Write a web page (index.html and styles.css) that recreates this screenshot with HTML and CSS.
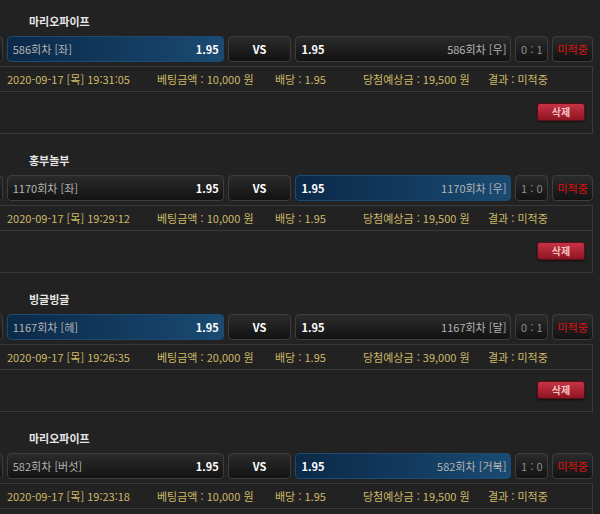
FILE: index.html
```html
<!DOCTYPE html>
<html lang="ko">
<head>
<meta charset="utf-8">
<link rel="stylesheet" href="styles.css">
</head>
<body>
<div class="wrap">

  <div class="block">
    <div class="title">마리오파이프</div>
    <div class="row">
      <div class="btn stub"></div>
      <div class="btn team left sel"><span class="name">586회차 [좌]</span><span class="odd">1.95</span></div>
      <div class="btn vs">VS</div>
      <div class="btn team right"><span class="odd">1.95</span><span class="name">586회차 [우]</span></div>
      <div class="btn score">0 : 1</div>
      <div class="btn status">미적중</div>
    </div>
    <div class="info">
      <div class="info-row">
        <span class="c-date">2020-09-17 [목] 19:31:05</span>
        <span class="c-bet">베팅금액 : 10,000 원</span>
        <span class="c-odd">배당 : 1.95</span>
        <span class="c-exp">당첨예상금 : 19,500 원</span>
        <span class="c-res">결과 : 미적중</span>
      </div>
      <div class="info-foot"><button class="del">삭제</button></div>
    </div>
  </div>

  <div class="block">
    <div class="title">홍부놀부</div>
    <div class="row">
      <div class="btn stub"></div>
      <div class="btn team left"><span class="name">1170회차 [좌]</span><span class="odd">1.95</span></div>
      <div class="btn vs">VS</div>
      <div class="btn team right sel"><span class="odd">1.95</span><span class="name">1170회차 [우]</span></div>
      <div class="btn score">1 : 0</div>
      <div class="btn status">미적중</div>
    </div>
    <div class="info">
      <div class="info-row">
        <span class="c-date">2020-09-17 [목] 19:29:12</span>
        <span class="c-bet">베팅금액 : 10,000 원</span>
        <span class="c-odd">배당 : 1.95</span>
        <span class="c-exp">당첨예상금 : 19,500 원</span>
        <span class="c-res">결과 : 미적중</span>
      </div>
      <div class="info-foot"><button class="del">삭제</button></div>
    </div>
  </div>

  <div class="block">
    <div class="title">빙글빙글</div>
    <div class="row">
      <div class="btn stub"></div>
      <div class="btn team left sel"><span class="name">1167회차 [헤]</span><span class="odd">1.95</span></div>
      <div class="btn vs">VS</div>
      <div class="btn team right"><span class="odd">1.95</span><span class="name">1167회차 [달]</span></div>
      <div class="btn score">0 : 1</div>
      <div class="btn status">미적중</div>
    </div>
    <div class="info">
      <div class="info-row">
        <span class="c-date">2020-09-17 [목] 19:26:35</span>
        <span class="c-bet">베팅금액 : 20,000 원</span>
        <span class="c-odd">배당 : 1.95</span>
        <span class="c-exp">당첨예상금 : 39,000 원</span>
        <span class="c-res">결과 : 미적중</span>
      </div>
      <div class="info-foot"><button class="del">삭제</button></div>
    </div>
  </div>

  <div class="block">
    <div class="title">마리오파이프</div>
    <div class="row">
      <div class="btn stub"></div>
      <div class="btn team left"><span class="name">582회차 [버섯]</span><span class="odd">1.95</span></div>
      <div class="btn vs">VS</div>
      <div class="btn team right sel"><span class="odd">1.95</span><span class="name">582회차 [거북]</span></div>
      <div class="btn score">1 : 0</div>
      <div class="btn status">미적중</div>
    </div>
    <div class="info">
      <div class="info-row">
        <span class="c-date">2020-09-17 [목] 19:23:18</span>
        <span class="c-bet">베팅금액 : 10,000 원</span>
        <span class="c-odd">배당 : 1.95</span>
        <span class="c-exp">당첨예상금 : 19,500 원</span>
        <span class="c-res">결과 : 미적중</span>
      </div>
      <div class="info-foot"><button class="del">삭제</button></div>
    </div>
  </div>

</div>
</body>
</html>
```
FILE: styles.css
```css
html, body {
  margin: 0;
  padding: 0;
  background: #222222;
  overflow: hidden;
}
body {
  font-family: "Noto Sans CJK KR", "Noto Sans", sans-serif;
  font-size: 11px;
  color: #bbbbbb;
}
.wrap {
  margin-left: -50px;
  width: 643px;
}
.block {
  padding: 14px 0 5px;
}
.title {
  height: 15px;
  line-height: 15px;
  padding-left: 79px;
  font-weight: bold;
  color: #e6e6e6;
  margin-bottom: 7px;
}
.row {
  display: flex;
  gap: 4px;
  height: 26px;
}
.btn {
  box-sizing: border-box;
  height: 26px;
  border: 1px solid #3d3d3d;
  border-radius: 4px;
  background: linear-gradient(#2b2b2b, #121212);
  display: flex;
  align-items: center;
  line-height: 24px;
  white-space: nowrap;
}
.stub { width: 53px; }
.team { justify-content: space-between; }
.team.left { width: 218px; padding: 0 4px 0 5px; }
.team.right { width: 217px; padding: 0 4px 0 5px; }
.team .name { color: #b4b4b4; }
.team .odd { color: #ffffff; font-weight: bold; }
.team.sel {
  background: linear-gradient(90deg, #0b2948, #1a4a72);
  border-color: #1c4a73;
}
.vs {
  width: 64px;
  justify-content: center;
  color: #ffffff;
  font-weight: bold;
}
.score {
  width: 33px;
  justify-content: center;
  color: #8c8c8c;
}
.status {
  width: 41px;
  justify-content: center;
  color: #e01010;
}
.info {
  margin-top: 4px;
  width: 643px;
  box-sizing: border-box;
  border: 1px solid #3a3a3a;
  height: 68px;
}
.info-row {
  display: flex;
  height: 24px;
  line-height: 24px;
  border-bottom: 1px solid #3a3a3a;
  padding-left: 56px;
  color: #cdb967;
  white-space: nowrap;
}
.c-date { width: 150px; }
.c-bet { width: 118px; }
.c-odd { width: 88px; }
.c-exp { width: 125px; }
.info-foot {
  display: flex;
  justify-content: flex-end;
  padding: 11px 7px 0 0;
}
.del {
  width: 48px;
  height: 18px;
  padding: 0;
  border: 1px solid #5a1018;
  border-radius: 3px;
  background: linear-gradient(#c73344, #8e1523);
  color: #f3c6c6;
  font-family: "Noto Sans CJK KR", sans-serif;
  font-size: 10px;
  font-weight: bold;
  line-height: 16px;
  box-shadow: 0 1px 2px rgba(0,0,0,0.6);
}
```
